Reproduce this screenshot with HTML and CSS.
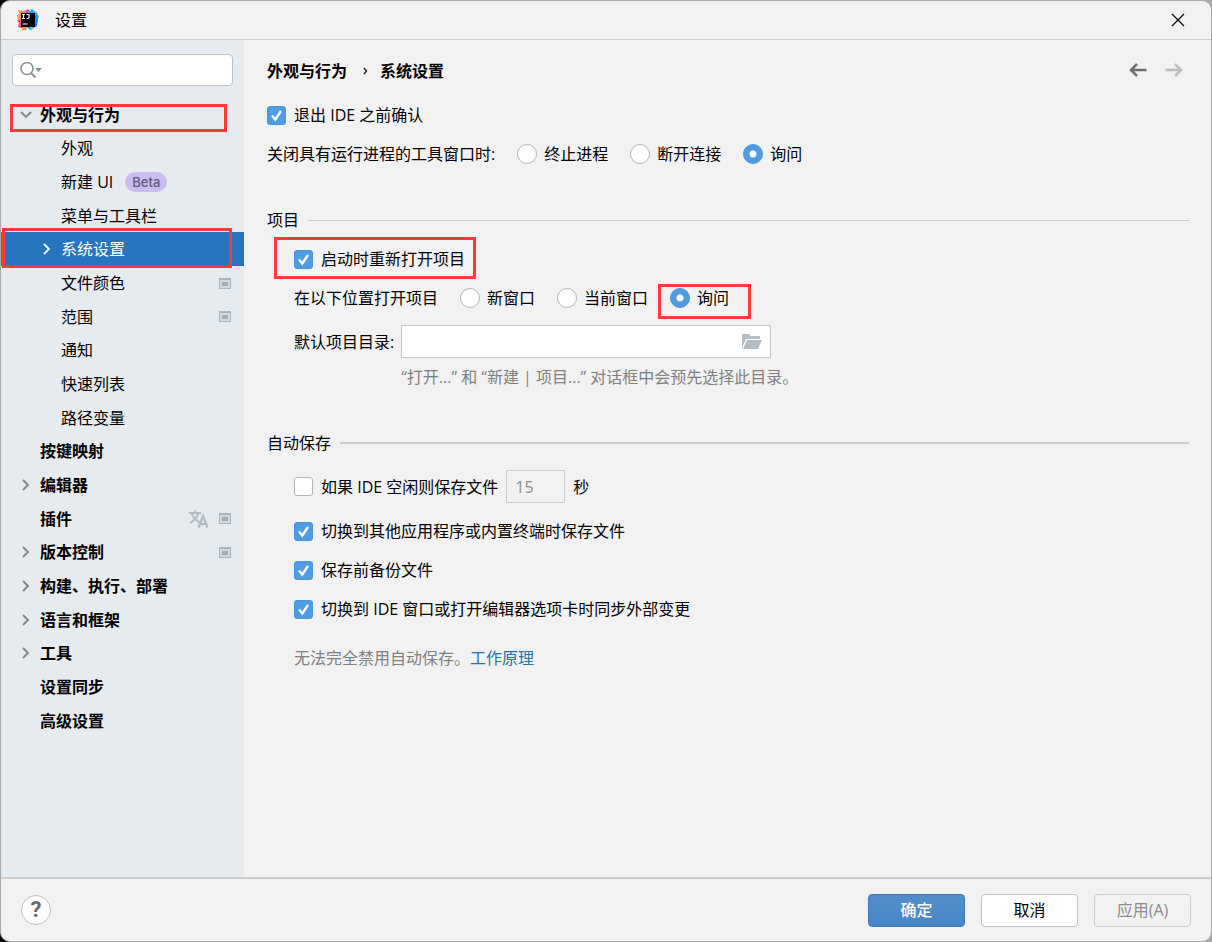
FILE: index.html
```html
<!DOCTYPE html>
<html lang="zh-CN">
<head>
<meta charset="utf-8">
<title>设置</title>
<meta name="viewport" content="width=device-width, initial-scale=1">
<link rel="stylesheet" href="styles.css">
</head>
<body>
<svg class="defs" aria-hidden="true">
  <symbol id="chevron" viewBox="0 0 12 12"><path d="M3 1l5 5-5 5" fill="none" stroke="currentColor" stroke-width="1.9"/></symbol>
  <symbol id="project" viewBox="0 0 12 11"><path d="M0 0h12v11H0z" fill="#a9b6bf"/><path d="M1 2h10v8H1z" fill="#d3dbe0"/><path d="M3 4h6v4H3z" fill="#a2afb8"/></symbol>
</svg>
<div class="window">
  <header class="titlebar">
    <svg class="logo" viewBox="0 0 22 22" aria-hidden="true">
      <path d="M1 1l5 1 3-1 3 3-3 6H0l3-4z" fill="#fc8a55"/>
      <path d="M0 6l5-2v10H2z" fill="#ff9a4a"/>
      <path d="M8 2l3-2 3 3-3 3z" fill="#c65bd8"/>
      <path d="M11 4l4-4 5 4 2 4-4 4z" fill="#25a7f7"/>
      <path d="M17 4l4 6-1 7-7 4-4-4z" fill="#1b87f5"/>
      <path d="M0 11l5-1 5 8-1 3-8-3 1-4z" fill="#fe4a78"/>
      <path d="M5 17h6l-2 3-4 2z" fill="#fb9a3c"/>
      <path d="M12 17h5l-3 5z" fill="#35cdf8"/>
      <path d="M4 4h14v14H4z"/>
      <path d="M5 5.500h3M6.500 5.500v4M5 9.500h3M9.500 5.500h2.500v3q0 1-1 1H9.500M5.500 15h5" fill="none" stroke="#fff" stroke-width="1.1"/>
    </svg>
    <h1 class="title">设置</h1>
    <button class="close" type="button" aria-label="关闭"><svg viewBox="0 0 14 14"><path d="M1 1l12 12M13 1L1 13" fill="none" stroke="#111" stroke-width="1.4"/></svg></button>
  </header>
  <div class="body">
    <aside class="sidebar">
      <label class="search">
        <svg viewBox="0 0 22 18" aria-hidden="true"><circle cx="7" cy="7.500" r="6" fill="none" stroke="#87939a" stroke-width="1.6"/><path d="M11 12l4.500 4.500" stroke="#87939a" stroke-width="2"/><path d="M15 7h7l-3.500 4z" fill="#87939a"/></svg>
        <input type="text" aria-label="搜索设置">
      </label>
      <ul class="tree">
        <li class="row top mark mark-top"><svg class="arrow open"><use href="#chevron"/></svg><span>外观与行为</span></li>
        <li class="row">外观</li>
        <li class="row">新建 UI<span class="beta">Beta</span></li>
        <li class="row">菜单与工具栏</li>
        <li class="row selected mark mark-selected"><svg class="arrow"><use href="#chevron"/></svg><span>系统设置</span></li>
        <li class="row">文件颜色<svg class="scope"><use href="#project"/></svg></li>
        <li class="row">范围<svg class="scope"><use href="#project"/></svg></li>
        <li class="row">通知</li>
        <li class="row">快速列表</li>
        <li class="row">路径变量</li>
        <li class="row top">按键映射</li>
        <li class="row top"><svg class="arrow"><use href="#chevron"/></svg><span>编辑器</span></li>
        <li class="row top">插件<svg class="translate" viewBox="0 0 20 18" aria-hidden="true"><path d="M0 3h12M6 0v3M2.500 3q2 6 8 9.500M9.500 3Q8 9 1 13" fill="none" stroke="#b3bac0" stroke-width="1.900"/><path d="M9.500 17.500L14 6l4.500 11.500M11 14h6" fill="none" stroke="#b3bac0" stroke-width="2.200"/></svg><svg class="scope"><use href="#project"/></svg></li>
        <li class="row top"><svg class="arrow"><use href="#chevron"/></svg><span>版本控制</span><svg class="scope"><use href="#project"/></svg></li>
        <li class="row top"><svg class="arrow"><use href="#chevron"/></svg><span>构建、执行、部署</span></li>
        <li class="row top"><svg class="arrow"><use href="#chevron"/></svg><span>语言和框架</span></li>
        <li class="row top"><svg class="arrow"><use href="#chevron"/></svg><span>工具</span></li>
        <li class="row top">设置同步</li>
        <li class="row top">高级设置</li>
      </ul>
    </aside>
    <main class="content">
      <div class="crumbs">
        <span>外观与行为</span><svg class="sep" viewBox="0 0 5 8" aria-hidden="true"><path d="M1 1l2.500 3L1 7" fill="none" stroke="#222" stroke-width="1.400"/></svg><span>系统设置</span>
        <div class="nav">
          <button type="button" aria-label="后退"><svg viewBox="0 0 18 14"><path d="M17.500 7H2M8 1L2 7l6 6" fill="none" stroke="#6e6e6e" stroke-width="2.500"/></svg></button>
          <button type="button" aria-label="前进" disabled><svg viewBox="0 0 18 14"><path d="M.5 7H16M10 1l6 6-6 6" fill="none" stroke="#bdbdbd" stroke-width="2.500"/></svg></button>
        </div>
      </div>
      <section class="group">
        <label class="option"><input type="checkbox" checked>退出 IDE 之前确认</label>
        <div class="choices" role="radiogroup" aria-labelledby="close-label">
          <span id="close-label">关闭具有运行进程的工具窗口时:</span>
          <label class="option"><input type="radio" name="close">终止进程</label>
          <label class="option"><input type="radio" name="close">断开连接</label>
          <label class="option"><input type="radio" name="close" checked>询问</label>
        </div>
      </section>
      <section class="group">
        <h2 class="heading">项目</h2>
        <div class="indent">
          <label class="option mark mark-reopen"><input type="checkbox" checked>启动时重新打开项目</label>
          <div class="choices" role="radiogroup" aria-labelledby="open-label">
            <span id="open-label">在以下位置打开项目</span>
            <label class="option"><input type="radio" name="open">新窗口</label>
            <label class="option"><input type="radio" name="open">当前窗口</label>
            <label class="option mark mark-ask"><input type="radio" name="open" checked>询问</label>
          </div>
          <div class="directory">
            <label for="dir">默认项目目录:</label>
            <div class="path">
              <input id="dir" type="text">
              <button type="button" aria-label="浏览"><svg viewBox="0 0 20 16"><path d="M0 0h7l2 2h9v3H4L0 14z" fill="#b5bdc3"/><path d="M5 6h15l-4 9H1z" fill="#b5bdc3"/></svg></button>
            </div>
            <p class="hint">“打开...” 和 “新建 | 项目...” 对话框中会预先选择此目录。</p>
          </div>
        </div>
      </section>
      <section class="group">
        <h2 class="heading thick">自动保存</h2>
        <div class="indent">
          <div class="idle">
            <label class="option"><input type="checkbox">如果 IDE 空闲则保存文件</label>
            <input class="seconds" type="text" value="15" aria-label="秒数" disabled>
            <span>秒</span>
          </div>
          <label class="option"><input type="checkbox" checked>切换到其他应用程序或内置终端时保存文件</label>
          <label class="option"><input type="checkbox" checked>保存前备份文件</label>
          <label class="option"><input type="checkbox" checked>切换到 IDE 窗口或打开编辑器选项卡时同步外部变更</label>
          <p class="note">无法完全禁用自动保存。<a href="#">工作原理</a></p>
        </div>
      </section>
    </main>
  </div>
  <footer class="footer">
    <button class="help" type="button" aria-label="帮助">?</button>
    <button class="btn primary" type="button">确定</button>
    <button class="btn" type="button">取消</button>
    <button class="btn" type="button" disabled>应用(A)</button>
  </footer>
</div>
</body>
</html>
```
FILE: styles.css
```css
* { box-sizing: border-box; }
body {
  margin: 0;
  background: linear-gradient(to right, #0a0a0a 48px, #a9a9a9 48px);
  color: #000;
  font: 16px/24px "Open Sans", "Noto Sans CJK SC", sans-serif;
}
button, input { font: inherit; color: inherit; }
button { padding: 0; border: 0; background: none; }
button svg { display: block; width: 100%; }
h1, h2, p, ul { margin: 0; padding: 0; font-size: 16px; font-weight: 400; }
.defs { position: absolute; width: 0; height: 0; }

.window {
  display: flex;
  flex-direction: column;
  min-height: 100vh;
  border: 1px solid #aaa;
  border-radius: 10px;
  background: #f2f2f2;
  overflow: hidden;
}
.titlebar {
  display: flex;
  align-items: center;
  height: 39px;
  padding: 0 26px 0 16px;
  border-bottom: 1px solid #ccc;
}
.logo { width: 22px; height: 22px; margin-right: 16px; }
.close { width: 14px; margin-left: auto; }

.body { display: flex; flex: 1; }
.sidebar { width: 243px; flex: none; padding-top: 14px; background: #e6ebef; }
.search {
  display: flex;
  align-items: center;
  gap: 4px;
  height: 32px;
  margin: 0 11px 12px;
  padding: 0 7px;
  border: 1px solid #c0c0c0;
  border-radius: 4px;
  background: #fff;
}
.search svg { width: 22px; height: 18px; flex: none; }
.search input { flex: 1; min-width: 0; border: 0; outline: 0; background: none; }

.tree { list-style: none; }
.row {
  display: flex;
  align-items: center;
  height: 34px;
  padding: 0 13px 0 60px;
}
.row:nth-child(3n+1) { height: 33px; }
.row.top { padding-left: 39px; font-weight: 700; }
.arrow { width: 12px; height: 12px; margin-left: -20px; margin-right: 8px; color: #7f8589; }
.arrow.open { transform: rotate(90deg); }
.selected { background: #2675bf; color: #fff; }
.selected .arrow { color: #fff; }
.beta {
  height: 20px;
  margin-left: 12px;
  padding: 0 7px;
  border-radius: 10px;
  background: #cbbcf2;
  color: #62597a;
  font: 500 13px/20px Inter, sans-serif;
}
.scope { width: 12px; height: 11px; margin-left: auto; }
.translate { width: 20px; height: 18px; margin-left: auto; }
.translate + .scope { margin-left: 10px; }

/* Red callout frames drawn over the controls */
.mark { position: relative; }
.mark::after { content: ""; position: absolute; border: 3px solid #fc3a3a; pointer-events: none; }
.mark-top::after { inset: 6px 17px -1px 9px; }
.mark-selected::after { inset: -4px 12px -2px 1px; }
.mark-reopen::after { inset: -10px -11px -8px -20px; }
.mark-ask::after { inset: -2px -22px -9px -12px; }

.content { flex: 1; min-width: 0; padding: 19px 22px 24px 23px; }
.crumbs { display: flex; align-items: center; margin-bottom: 20px; font-weight: 700; }
.sep { width: 5px; height: 8px; margin: 0 12px 0 16px; }
.nav { display: flex; gap: 18px; margin-left: auto; padding: 0 6px 2px 0; }
.nav button { width: 18px; }

.group { display: flex; flex-direction: column; gap: 15px; margin-bottom: 42px; }
.heading { display: flex; align-items: center; gap: 9px; }
.heading::after { content: ""; flex: 1; height: 1px; background: #ccc; }
.heading.thick::after { height: 2px; }
.indent { display: flex; flex-direction: column; align-items: flex-start; gap: 15px; padding-left: 27px; }
.option { display: flex; align-items: center; gap: 8px; width: fit-content; }
.choices { display: flex; gap: 22px; }
.choices .option { gap: 7px; }

input[type="checkbox"], input[type="radio"] {
  appearance: none;
  flex: none;
  width: 19px;
  height: 19px;
  margin: 0;
  border: 1px solid #b5b5b5;
  border-radius: 3px;
  background: #fff;
}
input[type="checkbox"]:checked {
  border-color: #4a94dc;
  background: #4f9ce3 url("data:image/svg+xml,%3Csvg xmlns='http://www.w3.org/2000/svg' viewBox='0 0 17 17'%3E%3Cpath d='M4 8.500l3.300 4L13 4' fill='none' stroke='%23fff' stroke-width='2.400'/%3E%3C/svg%3E");
}
input[type="radio"] { width: 20px; height: 20px; border-radius: 50%; }
input[type="radio"]:checked { border-color: #4a94dc; background: radial-gradient(circle, #fff 3px, #4f9ce3 4px); }

.directory { display: grid; grid-template-columns: auto 370px; align-items: center; gap: 7px; }
.path {
  display: flex;
  align-items: center;
  height: 33px;
  padding: 0 8px;
  border: 1px solid #c6c6c6;
  background: #fff;
}
.path input { flex: 1; min-width: 0; border: 0; outline: 0; background: none; }
.path button { width: 20px; }
.hint { grid-column: 2; white-space: nowrap; color: #808080; }
.idle { display: flex; align-items: center; gap: 8px; margin-bottom: 1px; }
.seconds { width: 59px; height: 33px; padding: 0 8px; border: 1px solid #ccc; background: #f2f2f2; color: #8c8c8c; }
.note { margin-top: 10px; color: #808080; }
.note a { color: #2470b3; text-decoration: none; }

.footer {
  display: flex;
  align-items: center;
  gap: 16px;
  height: 64px;
  padding: 0 20px;
  border-top: 2px solid #ccc;
}
.help {
  width: 30px;
  height: 30px;
  margin-right: auto;
  border: 1px solid #c0c0c0;
  border-radius: 50%;
  background: #fff;
  color: #6a6a6a;
  font: 700 22px/28px Roboto, sans-serif;
}
.btn {
  width: 97px;
  height: 33px;
  border: 1px solid #c2c2c2;
  border-radius: 4px;
  background: #fff;
}
.btn.primary { border-color: #3d75b2; background: linear-gradient(#528ccb, #4a86c6); color: #fff; font-weight: 500; }
.btn:disabled { border-color: #ccc; background: none; color: #8c8c8c; }
```
